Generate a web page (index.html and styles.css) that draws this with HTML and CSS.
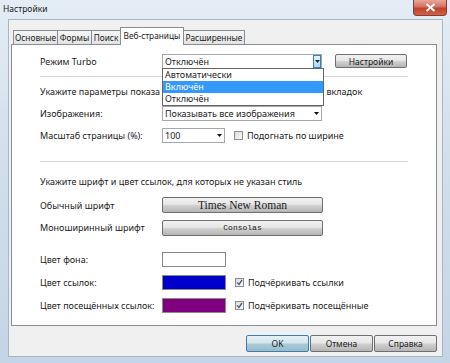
FILE: index.html
```html
<!DOCTYPE html>
<html lang="ru">
<head>
  <meta charset="UTF-8" />
  <title>Настройки</title>
  <link rel="stylesheet" href="styles.css">
</head>
<body>
  <div class="window">
    <div class="titlebar">
      <span class="title">Настройки</span>
      <span class="close">
        <svg width="11" height="9" viewBox="0 0 11 9"><path d="M1.5 1 L9.5 8 M9.5 1 L1.5 8" stroke="#fff" stroke-width="2" /></svg>
      </span>
    </div>
    <div class="client">
      <div class="tabs">
        <div class="tab tab-main">Основные</div>
        <div class="tab tab-forms">Формы</div>
        <div class="tab tab-search">Поиск</div>
        <div class="tab tab-web active">Веб-страницы</div>
        <div class="tab tab-adv">Расширенные</div>
      </div>
      <div class="panel">
        <div class="row row-turbo">
          <span class="label">Режим Turbo</span>
          <div class="combo combo-wide">
            <span class="value">Отключён</span>
            <span class="drop-btn">
              <svg width="5" height="3" viewBox="0 0 5 3"><path d="M0 0 H5 L2.5 3 Z" fill="#1a2a44" /></svg>
            </span>
            <ul class="dropdown">
              <li>Автоматически</li>
              <li class="selected">Включён</li>
              <li>Отключён</li>
            </ul>
          </div>
          <button class="btn btn-settings">Настройки</button>
        </div>
        <div class="sep sep-first"></div>
        <p class="note note-images">Укажите параметры показа изображений и масштаба для новых вкладок</p>
        <div class="row row-images">
          <span class="label">Изображения:</span>
          <div class="combo combo-wide">
            <span class="value">Показывать все изображения</span>
            <span class="arrow"><svg width="5" height="3" viewBox="0 0 5 3"><path d="M0 0 H5 L2.5 3 Z" fill="#111" /></svg></span>
          </div>
        </div>
        <div class="row row-zoom">
          <span class="label">Масштаб страницы (%):</span>
          <div class="combo combo-small">
            <span class="value">100</span>
            <span class="arrow"><svg width="5" height="3" viewBox="0 0 5 3"><path d="M0 0 H5 L2.5 3 Z" fill="#111" /></svg></span>
          </div>
          <span class="check"><span class="box"></span>Подогнать по ширине</span>
        </div>
        <div class="sep sep-second"></div>
        <p class="note note-fonts">Укажите шрифт и цвет ссылок, для которых не указан стиль</p>
        <div class="row row-font">
          <span class="label">Обычный шрифт</span>
          <button class="btn btn-font serif">Times New Roman</button>
        </div>
        <div class="row row-mono">
          <span class="label">Моноширинный шрифт</span>
          <button class="btn btn-font mono">Consolas</button>
        </div>
        <div class="row row-bg">
          <span class="label">Цвет фона:</span>
          <span class="swatch swatch-white"></span>
        </div>
        <div class="row row-link">
          <span class="label">Цвет ссылок:</span>
          <span class="swatch swatch-blue"></span>
          <span class="check"><span class="box checked"><svg width="7" height="7" viewBox="0 0 7 7"><path d="M1 3.5 L3 5.5 L6 1" stroke="#4a5f86" stroke-width="1.4" fill="none" /></svg></span>Подчёркивать ссылки</span>
        </div>
        <div class="row row-visited">
          <span class="label">Цвет посещённых ссылок:</span>
          <span class="swatch swatch-purple"></span>
          <span class="check"><span class="box checked"><svg width="7" height="7" viewBox="0 0 7 7"><path d="M1 3.5 L3 5.5 L6 1" stroke="#4a5f86" stroke-width="1.4" fill="none" /></svg></span>Подчёркивать посещённые</span>
        </div>
      </div>
      <div class="actions">
        <button class="btn btn-action btn-default">OK</button>
        <button class="btn btn-action">Отмена</button>
        <button class="btn btn-action">Справка</button>
      </div>
    </div>
  </div>
</body>
</html>
```

FILE: styles.css
```css
html, body { margin: 0; padding: 0; }
body { width: 450px; height: 363px; overflow: hidden; font-family: "Segoe UI", "Noto Sans", sans-serif; font-size: 9px; color: #1c1c1c; }
.window { width: 450px; height: 363px; background: linear-gradient(to bottom, #e4edf5 0%, #d2e0ec 40%, #c3d5e6 100%); position: relative; }
.titlebar { height: 19px; display: flex; align-items: flex-start; position: relative; }
.title { margin: 3px 0 0 3px; font-size: 8.5px; color: #222; }
.close { position: absolute; right: 3px; top: 0; width: 34px; height: 16px; border: 1px solid #8a3a2e; border-top: none; border-radius: 0 0 4px 4px; background: linear-gradient(to bottom, #e8a799 0%, #d47160 45%, #c0402b 55%, #d0624a 100%); display: flex; align-items: center; justify-content: center; box-sizing: border-box; }
.client { margin-left: 8px; width: 435px; height: 338px; box-sizing: border-box; background: #f0f0f0; border: 1px solid #a9b6c4; padding: 7px 5px 0 2px; }
.tabs { display: flex; align-items: flex-end; height: 17px; margin-left: 2px; position: relative; z-index: 2; }
.tab { height: 14px; line-height: 13px; font-size: 8.3px; text-align: center; box-sizing: border-box; border: 1px solid #898c95; border-bottom: none; border-left: none; background: linear-gradient(to bottom, #f6f6f6, #e2e2e2); white-space: nowrap; overflow: hidden; }
.tab-main { width: 45px; border-left: 1px solid #898c95; }
.tab-forms { width: 34px; }
.tab-search { width: 29px; }
.tab-web { width: 64px; }
.tab-adv { width: 61px; }
.tab.active { height: 18px; line-height: 16px; margin-bottom: -1px; background: #fff; border-left: 1px solid #898c95; margin-left: -1px; }
.tab.active + .tab { border-left: none; }
.panel { height: 282px; box-sizing: border-box; border: 1px solid #898c95; background: #fff; padding: 8px 28px 0 28px; position: relative; }
.row { display: flex; align-items: center; height: 15px; }
.label { flex: 0 0 122px; white-space: nowrap; }
.row-turbo { height: 16px; }
.row-images { margin-top: 7px; }
.row-zoom { margin-top: 7px; }
.row-font { height: 16px; margin-top: 8px; }
.row-mono { height: 17px; margin-top: 6px; }
.row-bg { margin-top: 16px; }
.row-link { margin-top: 8px; }
.row-visited { margin-top: 8px; }
.sep { height: 0; border-top: 1px solid #d5d5d5; width: 368px; }
.sep-first { margin-top: 7px; }
.sep-second { margin-top: 18px; }
.note { margin: 0; height: 14px; line-height: 14px; white-space: nowrap; }
.note-images { margin-top: 8px; }
.note-fonts { margin-top: 13px; }
.combo { position: relative; height: 15px; box-sizing: border-box; border: 1px solid #a4a7ad; background: #fff; display: flex; align-items: center; padding-left: 2px; }
.combo-wide { width: 160px; }
.combo-small { width: 63px; }
.combo .value { flex: 1; white-space: nowrap; }
.arrow { width: 10px; display: flex; justify-content: center; }
.drop-btn { width: 8px; height: 13px; box-sizing: border-box; border: 1px solid #3c7fb1; background: linear-gradient(to bottom, #eaf6fd, #a7d9f5); display: flex; align-items: center; justify-content: center; }
.dropdown { position: absolute; left: -1px; top: 13px; width: 162px; box-sizing: border-box; margin: 0; padding: 0; list-style: none; border: 1px solid #646464; background: #fff; z-index: 5; }
.dropdown li { height: 12px; line-height: 12px; padding-left: 2px; }
.dropdown li.selected { background: #3399ff; color: #fff; }
.btn { font-family: inherit; font-size: 8.5px; color: #1c1c1c; padding: 0; box-sizing: border-box; border: 1px solid #707070; border-radius: 2px; background: linear-gradient(to bottom, #f2f2f2 0%, #e6e6e6 45%, #cfcfcf 55%, #b5b5b5 100%); }
.btn-settings { width: 72px; height: 14px; margin-left: 13px; }
.btn-font { width: 161px; height: 16px; }
.serif { font-family: "Liberation Serif", serif; font-size: 11.5px; line-height: 12px; }
.mono { font-family: "Liberation Mono", monospace; font-size: 8px; }
.swatch { width: 64px; height: 15px; box-sizing: border-box; border: 1px solid #8a8a8a; }
.swatch-white { background: #fff; }
.swatch-blue { background: #0000cc; }
.swatch-purple { background: #800080; }
.check { display: flex; align-items: center; margin-left: 9px; white-space: nowrap; }
.box { width: 9px; height: 9px; box-sizing: border-box; border: 1px solid #8e8f8f; background: linear-gradient(135deg, #dcdcdc, #fafafa); margin-right: 4px; display: flex; align-items: center; justify-content: center; }
.actions { display: flex; justify-content: flex-end; gap: 1px; margin-top: 9px; }
.btn-action { width: 63px; height: 17px; }
.btn-default { border-color: #3c7fb1; background: linear-gradient(to bottom, #e5f1f7 0%, #d2e6ee 45%, #a9c9d6 55%, #98bccb 100%); }
```
